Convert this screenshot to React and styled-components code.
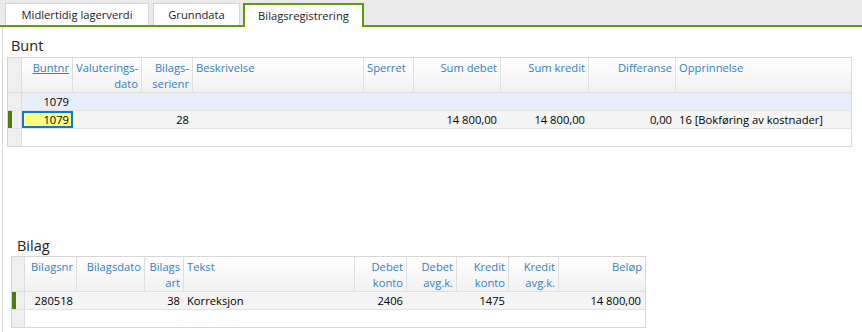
import React from 'react';
import styled, { createGlobalStyle } from 'styled-components';

const GlobalStyle = createGlobalStyle`
  html, body { margin: 0; padding: 0; background: #fff; }
  body { font-family: "Open Sans", "Noto Sans", sans-serif; }
`;

const FONT = `"Open Sans", "Noto Sans", "DejaVu Sans", sans-serif`;
const FS = '11.2px';

const Page = styled.div`
  width: 862px;
  height: 332px;
  overflow: hidden;
  background: #fff;
  display: flex;
  flex-direction: column;
  font-family: ${FONT};
  font-size: ${FS};
  color: #000;
`;

const TabBar = styled.div`
  height: 25px;
  background: #eaeaea;
  border-bottom: 2px solid #5e9c0e;
  display: flex;
  align-items: flex-end;
  padding-left: 5px;
`;

const Tab = styled.div`
  box-sizing: border-box;
  width: ${(p) => p.$w}px;
  margin-right: ${(p) => p.$gap}px;
  height: ${(p) => (p.$active ? 24 : 22)}px;
  margin-bottom: ${(p) => (p.$active ? -2 : 0)}px;
  background: #fff;
  border: ${(p) => (p.$active ? '2px solid #5e9c0e' : '1px solid #d6d6d6')};
  border-bottom: none;
  display: flex;
  align-items: center;
  justify-content: center;
  padding-bottom: ${(p) => (p.$active ? 1 : 0)}px;
  color: #1b1b1b;
  font-size: ${FS};
  position: relative;
  z-index: ${(p) => (p.$active ? 1 : 0)};
`;

const Pane = styled.div`
  flex: 1;
  margin-left: 2px;
  border-left: 1px solid #dadada;
  padding-top: 10px;
  display: flex;
  flex-direction: column;
`;

const Section = styled.section`
  display: flex;
  flex-direction: column;
  margin-left: ${(p) => p.$indent}px;
  margin-top: ${(p) => p.$top}px;
`;

const Title = styled.div`
  font-size: 14.5px;
  line-height: 18px;
  color: #222;
  padding-left: ${(p) => p.$pad}px;
  margin-bottom: ${(p) => p.$gap}px;
`;

const Table = styled.div`
  box-sizing: border-box;
  width: ${(p) => p.$w}px;
  border: 1px solid #d6d6d6;
  display: flex;
  flex-direction: column;
`;

const Row = styled.div`
  display: grid;
  grid-template-columns: ${(p) => p.$cols.map((c) => `${c}px`).join(' ')};
  background: ${(p) => p.$bg || '#fff'};
  border-bottom: ${(p) => (p.$last ? 'none' : '1px solid #e1e1e1')};
`;

const HeaderRow = styled(Row)`
  height: 35px;
  box-sizing: border-box;
  background: linear-gradient(#ffffff, #f1f1f1);
  border-bottom: 1px solid #dcdcdc;
`;

const HeadCell = styled.div`
  box-sizing: border-box;
  border-right: ${(p) => (p.$lastCol ? 'none' : '1px solid #dedede')};
  color: #2f80c8;
  font-size: ${FS};
  line-height: 16px;
  padding: 2px 3px 0 3px;
  text-align: ${(p) => p.$align || 'left'};
  white-space: nowrap;
  overflow: hidden;
`;

const SortLabel = styled.span`
  text-decoration: underline;
`;

const IndicatorCell = styled.div`
  box-sizing: border-box;
  background: #efefef;
  border-right: 1px solid #dcdcdc;
  box-shadow: ${(p) => (p.$mark ? 'inset 4px 0 0 #4c7d0c' : 'none')};
`;

const Cell = styled.div`
  box-sizing: border-box;
  height: 17px;
  line-height: 17px;
  font-size: ${FS};
  padding: 0 4px 0 3px;
  text-align: ${(p) => p.$align || 'left'};
  white-space: nowrap;
  overflow: hidden;
  background: ${(p) => (p.$focus ? '#ffff80' : 'transparent')};
  box-shadow: ${(p) => (p.$focus ? 'inset 0 0 0 2px #0b7ad2' : 'none')};
`;

const buntCols = [14, 51, 69, 51, 171, 50, 87, 88, 87, 175];
const buntHeads = [
  { a: 'right', t: <SortLabel>Buntnr</SortLabel> },
  { a: 'right', t: <>Valuterings-<br />dato</> },
  { a: 'right', t: <>Bilags-<br />serienr</> },
  { a: 'left', t: 'Beskrivelse' },
  { a: 'left', t: 'Sperret' },
  { a: 'right', t: 'Sum debet' },
  { a: 'right', t: 'Sum kredit' },
  { a: 'right', t: 'Differanse' },
  { a: 'left', t: 'Opprinnelse' },
];
const buntRows = [
  { bg: '#e5eefa', cells: ['1079', '', '', '', '', '', '', '', ''] },
  {
    bg: '#f4f4f4',
    mark: true,
    focus: 0,
    cells: ['1079', '', '28', '', '', '14 800,00', '14 800,00', '0,00', '16 [Bokføring av kostnader]'],
  },
  { bg: '#fff', cells: ['', '', '', '', '', '', '', '', ''] },
];

const bilagCols = [13, 52, 68, 39, 171, 52, 50, 52, 50, 86];
const bilagHeads = [
  { a: 'right', t: 'Bilagsnr' },
  { a: 'right', t: 'Bilagsdato' },
  { a: 'right', t: <>Bilags<br />art</> },
  { a: 'left', t: 'Tekst' },
  { a: 'right', t: <>Debet<br />konto</> },
  { a: 'right', t: <>Debet<br />avg.k.</> },
  { a: 'right', t: <>Kredit<br />konto</> },
  { a: 'right', t: <>Kredit<br />avg.k.</> },
  { a: 'right', t: 'Beløp' },
];
const bilagRows = [
  {
    bg: '#f4f4f4',
    mark: true,
    cells: ['280518', '', '38', 'Korreksjon', '2406', '', '1475', '', '14 800,00'],
  },
  { bg: '#fff', cells: ['', '', '', '', '', '', '', '', ''] },
];

function DataGrid({ cols, heads, rows, width }) {
  return (
    <Table $w={width}>
      <HeaderRow $cols={cols}>
        <IndicatorCell />
        {heads.map((h, i) => (
          <HeadCell key={i} $align={h.a} $lastCol={i === heads.length - 1}>
            {h.t}
          </HeadCell>
        ))}
      </HeaderRow>
      {rows.map((r, ri) => (
        <Row key={ri} $cols={cols} $bg={r.bg} $last={ri === rows.length - 1}>
          <IndicatorCell $mark={r.mark} />
          {r.cells.map((c, ci) => (
            <Cell key={ci} $align={heads[ci].a} $focus={r.focus === ci}>
              {c}
            </Cell>
          ))}
        </Row>
      ))}
    </Table>
  );
}

export default function App() {
  return (
    <Page>
      <GlobalStyle />
      <TabBar>
        <Tab $w={144} $gap={4}>Midlertidig lagerverdi</Tab>
        <Tab $w={87} $gap={3}>Grunndata</Tab>
        <Tab $w={121} $gap={0} $active>Bilagsregistrering</Tab>
      </TabBar>
      <Pane>
        <Section $indent={4} $top={0}>
          <Title $pad={4} $gap={2}>Bunt</Title>
          <DataGrid cols={buntCols} heads={buntHeads} rows={buntRows} width={845} />
        </Section>
        <Section $indent={8} $top={90}>
          <Title $pad={6} $gap={1}>Bilag</Title>
          <DataGrid cols={bilagCols} heads={bilagHeads} rows={bilagRows} width={635} />
        </Section>
      </Pane>
    </Page>
  );
}
